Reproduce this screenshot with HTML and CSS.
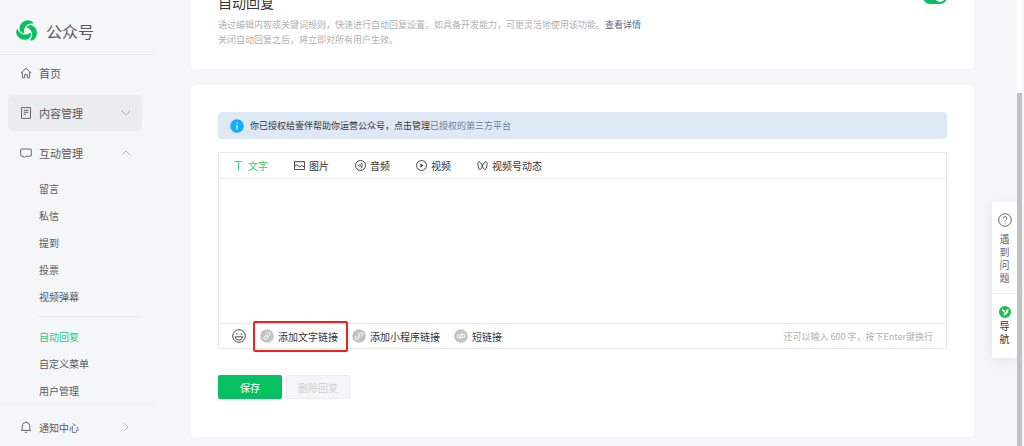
FILE: index.html
```html
<!DOCTYPE html>
<html lang="zh-CN">
<head>
<meta charset="utf-8">
<title>公众号 - 自动回复</title>
<link rel="stylesheet" href="styles.css">
</head>
<body>
<div class="app">
  <nav class="sidebar" aria-label="主导航">
    <div class="brand">
      <svg class="brand-logo" viewBox="0 0 22 22" aria-hidden="true">
        <g fill="#07c160">
          <path id="blade" d="M3.600 9.500C3 4 7.500 .2 12 .2C14.800 .2 17 1.600 17.800 3.800C13.500 3 9.900 5 8.500 8.500C7.800 10.200 7.700 11.800 8 13.400C5.800 12.900 3.900 11.500 3.600 9.500Z"/>
          <use href="#blade" transform="rotate(120 11 11)"/>
          <use href="#blade" transform="rotate(240 11 11)"/>
        </g>
      </svg>
      <span>公众号</span>
    </div>
    <div class="menu">
      <a class="item" href="#home">
        <svg class="icon" viewBox="0 0 12 12"><path d="M.8 6.200 6 1.200l5.200 5M2.400 5.200v5.600h2.300V7.600h2.600v3.200h2.300V5.200"/></svg>
        <span>首页</span>
      </a>
      <a class="item active" href="#content">
        <svg class="icon" viewBox="0 0 12 12"><path d="M1.500 .6h9v10.800h-9zM3.700 3.300h4.600M3.700 5.300h4.600M3.700 7.300h2.300"/></svg>
        <span>内容管理</span>
        <svg class="arrow" viewBox="0 0 10 10"><path d="m1 3 4 4 4-4"/></svg>
      </a>
      <a class="item" href="#interact">
        <svg class="icon" viewBox="0 0 12 12"><path d="M1.300 2h9.400q.6 0 .6.6v6q0 .6-.6.6H5.800L4.200 10.800 3.400 9.200H1.300q-.6 0-.6-.6v-6q0-.6.6-.6z"/></svg>
        <span>互动管理</span>
        <svg class="arrow" viewBox="0 0 10 10"><path d="m1 7 4-4 4 4"/></svg>
      </a>
    </div>
    <div class="submenu">
      <a href="#comment">留言</a>
      <a href="#message">私信</a>
      <a href="#mention">提到</a>
      <a href="#vote">投票</a>
      <a href="#danmu">视频弹幕</a>
      <hr>
      <a class="current" href="#reply">自动回复</a>
      <a href="#custom">自定义菜单</a>
      <a href="#users">用户管理</a>
    </div>
    <div class="notice">
      <a class="item small" href="#notice">
        <svg class="icon" viewBox="0 0 12 12"><path d="M1 9.400h10M2.200 9.400V5.200a3.800 3.800 0 0 1 7.600 0v4.200M6 .3v1.200M4.800 11.300h2.400"/></svg>
        <span>通知中心</span>
        <svg class="arrow" viewBox="0 0 10 10"><path d="m3 1 4 4-4 4"/></svg>
      </a>
    </div>
  </nav>

  <main class="main">
    <section class="card intro">
      <div class="intro-head">
        <h1>自动回复</h1>
        <input class="switch" type="checkbox" role="switch" checked aria-label="自动回复">
      </div>
      <p>通过编辑内容或关键词规则，快速进行自动回复设置。如具备开发能力，可更灵活地使用该功能。<a href="#detail">查看详情</a><br>关闭自动回复之后，将立即对所有用户生效。</p>
    </section>

    <section class="card body">
      <div class="banner">
        <svg class="info" viewBox="0 0 14 14" aria-hidden="true"><circle cx="7" cy="7" r="6.800" fill="#10aeff"/><path d="M7 6v4.500M7 3.500v1.200" stroke="#fff" stroke-width="1.200"/></svg>
        <span>你已授权给壹伴帮助你运营公众号，点击管理<a href="#third">已授权的第三方平台</a></span>
      </div>

      <div class="editor">
        <div class="tabs" role="tablist">
          <button class="tab on" role="tab" aria-selected="true"><svg viewBox="0 0 12 12"><path d="M1.500 1.700h9M6 1.700v9.500"/></svg>文字</button>
          <button class="tab" role="tab"><svg viewBox="0 0 12 12"><path d="M.6 1.800h10.800v8.600H.6zM.6 7l2.600-1.800 3 2.400 2.200-1.600 3 1.600"/></svg>图片</button>
          <button class="tab" role="tab"><svg viewBox="0 0 12 12"><circle cx="6" cy="6" r="5.400"/><path d="M3.600 5.200v1.600M5.200 4.200q1 1.800 0 3.600M7 3q2 3 0 6"/></svg>音频</button>
          <button class="tab" role="tab"><svg viewBox="0 0 12 12"><circle cx="6" cy="6" r="5.400"/><path class="solid" d="m4.800 3.900 3.400 2.100-3.400 2.100z"/></svg>视频</button>
          <button class="tab" role="tab"><svg viewBox="0 0 12 12"><path d="M6 7.500C5 4 3.400 1.600 1.800 1.900c-1.500.4-.6 8.200 1.200 8.400C4.500 10.300 5.300 8.500 6 6.500 7 3.500 8.700 1.600 10.200 1.900c1.500.4.6 8.200-1.200 8.400C7.600 10.400 6.700 9 6 7.500Z"/></svg>视频号动态</button>
        </div>
        <textarea aria-label="回复内容"></textarea>
        <div class="toolbar">
          <button class="emoji" aria-label="表情"><svg viewBox="0 0 14 14"><circle cx="7" cy="7" r="6.300"/><path d="M3.300 7.800h7.400q-.4 3.300-3.700 3.300t-3.700-3.300zM4.800 4.200v1.400M9.200 4.200v1.400"/></svg></button>
          <button class="tool marked"><svg viewBox="0 0 14 14"><circle cx="7" cy="7" r="6.800"/><path d="m6.300 5.200 1.300-1.300q1-.8 2 0t.2 2L8.200 7.600q-1 .8-2 0M7.700 8.800l-1.300 1.300q-1 .8-2 0t-.2-2l1.600-1.700q1-.8 2 0"/></svg>添加文字链接</button>
          <button class="tool"><svg viewBox="0 0 14 14"><circle cx="7" cy="7" r="6.800"/><path d="M5 7.100q-1.800.3-1.800 1.600 0 1.400 1.700 1.500Q7 10.200 7 8.200V5.600Q7 3.800 9 3.800q1.800.1 1.800 1.500Q10.800 6.600 9 6.900"/></svg>添加小程序链接</button>
          <button class="tool"><svg viewBox="0 0 14 14"><circle cx="7" cy="7" r="6.800"/><path d="M7.500 8.800H4.600q-1.600 0-1.600-1.500t1.600-1.500h2.500q1.300 0 1.500 1.200M6.500 5.200h2.900q1.600 0 1.600 1.500T9.400 8.200H6.900Q5.600 8.200 5.400 7"/></svg>短链接</button>
          <span class="hint">还可以输入 600 字，按下Enter键换行</span>
        </div>
      </div>

      <div class="actions">
        <button class="btn primary">保存</button>
        <button class="btn" disabled>删除回复</button>
      </div>
    </section>
  </main>

  <aside class="float">
    <a class="help" href="#help"><svg viewBox="0 0 14 14"><circle cx="7" cy="7" r="6.300"/><path d="M5.100 5.600q0-1.900 1.900-1.900t1.900 1.700q0 .9-1 1.500-.9.600-.9 1.500M7 9.600v1.100"/></svg><span>遇到问题</span></a>
    <a class="guide" href="#guide"><svg viewBox="0 0 12 12"><circle cx="6" cy="6" r="6" fill="#1fc050"/><path d="M3 4q2 0 2.600 2.400M8.900 3.300Q8 7.400 4.900 8.700" fill="none" stroke="#fff" stroke-width="1.700"/></svg><span>导航</span></a>
  </aside>
  <div class="scrollbar" aria-hidden="true"><div class="thumb"></div></div>
</div>
</body>
</html>
```
FILE: styles.css
```css
* { box-sizing: border-box; }

body {
  margin: 0;
  background: #f5f6f8;
  color: #353535;
  font-family: "Noto Sans CJK SC", sans-serif;
  font-size: 9px;
  overflow: hidden;
}

a { color: inherit; text-decoration: none; }

button {
  margin: 0;
  padding: 0;
  border: 0;
  background: none;
  color: inherit;
  font: inherit;
  font-size: 10px;
  cursor: pointer;
}

svg { display: block; flex: none; }

.app {
  display: flex;
  height: 100vh;
  overflow: hidden;
}

/* Sidebar */
.sidebar {
  flex: none;
  width: 154px;
  color: #5a5a5c;
}

.brand {
  display: flex;
  align-items: center;
  gap: 8px;
  height: 55px;
  padding: 8px 0 0 16px;
  border-bottom: 1px solid #eeeff1;
  font-size: 16px;
}

.brand-logo { width: 22px; height: 22px; }

.menu {
  display: grid;
  gap: 4px;
  padding: 0 12px 4px 8px;
}

.item {
  display: flex;
  align-items: center;
  gap: 7px;
  height: 36px;
  padding: 0 11px 0 12px;
  border-radius: 5px;
  font-size: 11px;
}

.item.active { background: #ebecee; }
.item.small { font-size: 10px; }

.icon {
  width: 12px;
  height: 12px;
  fill: none;
  stroke: #6a6a6c;
}

.arrow {
  width: 10px;
  height: 10px;
  margin-left: auto;
  fill: none;
  stroke: #b4b5b7;
}

.submenu {
  padding: 0 12px 0 39px;
  font-size: 10px;
}

.submenu a {
  display: block;
  line-height: 27px;
}

.submenu .current { color: #2ecb78; }

.submenu hr {
  margin: 6px 0;
  border: 0;
  border-top: 1px solid #eaebed;
}

.notice {
  padding: 4px 12px 0 8px;
  border-top: 1px solid #eeeff1;
}

/* Content */
.main {
  flex: 1;
  min-width: 0;
  margin-top: -37px;
  padding: 0 18px 0 37px;
}

.card {
  padding: 27px;
  border-radius: 5px;
  background: #fff;
}

.intro { margin-bottom: 16px; padding-bottom: 22px; }

.intro-head {
  display: flex;
  align-items: center;
  justify-content: space-between;
  height: 24px;
}

.intro h1 {
  margin: 0;
  font-size: 14px;
  font-weight: 400;
}

.switch {
  position: relative;
  align-self: flex-start;
  width: 24px;
  height: 14px;
  margin: 0;
  border-radius: 7px;
  background: #07c160;
  appearance: none;
}

.switch::after {
  content: "";
  position: absolute;
  top: 2px;
  right: 2px;
  width: 10px;
  height: 10px;
  border-radius: 50%;
  background: #fff;
}

.intro p {
  margin: 3px 0 0;
  color: #b2b2b2;
  line-height: 15px;
}

.intro p a { color: #576b95; }

.banner {
  display: flex;
  align-items: center;
  gap: 6px;
  height: 27px;
  margin-bottom: 13px;
  padding: 0 12px;
  border-radius: 4px;
  background: #dfe9f5;
}

.banner a { color: #6b7ba3; }

.info { width: 14px; height: 14px; }

.editor { border: 1px solid #e9e9eb; }

.tabs {
  display: flex;
  gap: 26px;
  height: 26px;
  padding: 0 14px;
  border-bottom: 1px solid #e9e9eb;
}

.tab {
  display: flex;
  align-items: center;
  gap: 4px;
}

.tab.on { color: #2ecb78; }

.tab svg {
  width: 11px;
  height: 11px;
  fill: none;
  stroke: currentColor;
}

.tab .solid { fill: currentColor; stroke: none; }

textarea {
  display: block;
  width: 100%;
  height: 144px;
  padding: 8px 14px;
  border: 0;
  outline: 0;
  resize: none;
  background: #fff;
  font: inherit;
}

.toolbar {
  display: flex;
  align-items: center;
  gap: 14px;
  height: 25px;
  padding: 0 13px;
  border-top: 1px solid #e9e9eb;
}

.emoji svg {
  width: 14px;
  height: 14px;
  fill: none;
  stroke: #4a4a4a;
}

.tool {
  position: relative;
  display: flex;
  align-items: center;
  gap: 4px;
}

.tool svg { width: 14px; height: 14px; }
.tool circle { fill: #c3c3c3; }
.tool path { fill: none; stroke: #fff; }

.marked::after {
  content: "";
  position: absolute;
  inset: -8px -10px -8px -7px;
  border: 2px solid #f5201c;
  border-radius: 2px;
}

.hint {
  margin-left: auto;
  color: #b2b2b2;
}

.actions {
  display: flex;
  gap: 4px;
  padding: 26px 0 11px;
}

.btn {
  width: 64px;
  height: 24px;
  border-radius: 2px;
}

.btn.primary { background: #07c160; color: #fff; }

.btn:disabled {
  border: 1px solid #ececee;
  background: #f5f6f8;
  color: #cfcfd1;
}

/* Right edge */
.float {
  flex: none;
  align-self: flex-start;
  width: 25px;
  margin-top: 202px;
  background: #fff;
  box-shadow: 0 3px 12px rgba(0, 0, 0, .08);
  color: #666;
  font-size: 10px;
  line-height: 13px;
}

.float a {
  display: flex;
  flex-direction: column;
  align-items: center;
  gap: 5px;
}

.float span { width: 10px; }

.help { padding: 11px 0 9px; }
.help svg { width: 14px; height: 14px; fill: none; stroke: #666; }

.float .guide {
  gap: 1px;
  padding: 12px 0 13px;
  border-top: 1px solid #eeeff1;
  color: #333;
}

.guide svg { width: 12px; height: 12px; }

.scrollbar {
  flex: none;
  width: 5px;
  height: 100%;
  margin-right: 2px;
  padding-top: 93px;
  background: #fff;
}

.thumb { height: 100%; background: #c1c1c1; }
```
